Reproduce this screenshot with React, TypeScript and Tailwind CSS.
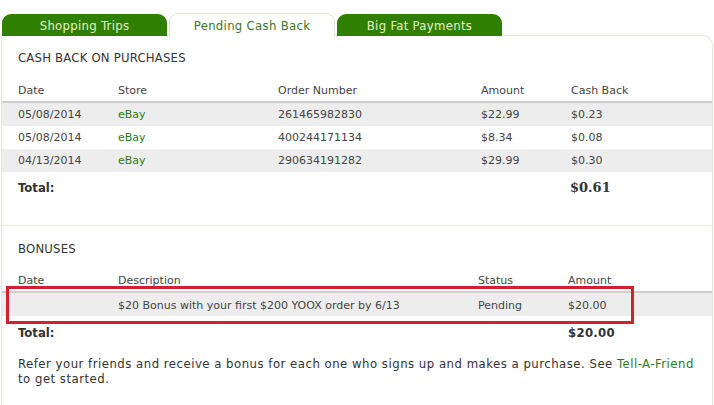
import { FC } from "react";

interface Purchase {
    date: string;
    store: string;
    order: string;
    amount: string;
    cashBack: string;
}

const purchases: Purchase[] = [
    { date: "05/08/2014", store: "eBay", order: "261465982830", amount: "$22.99", cashBack: "$0.23" },
    { date: "05/08/2014", store: "eBay", order: "400244171134", amount: "$8.34", cashBack: "$0.08" },
    { date: "04/13/2014", store: "eBay", order: "290634191282", amount: "$29.99", cashBack: "$0.30" },
];

const tahoma = "font-['DejaVu_Sans_Condensed','DejaVu_Sans',sans-serif]";
const verdana = "font-['DejaVu_Sans',Verdana,sans-serif]";

const App: FC = () => {
    return (
        <div className="relative h-[405px] w-[714px] overflow-hidden bg-white">
            {/* tabs */}
            <div className={`relative z-10 -mb-px flex gap-[2px] pl-[2px] pt-[13px] text-[13px] tracking-[0.3px] ${tahoma}`}>
                <div className="mt-px flex h-[22px] w-[165px] items-center justify-center rounded-t-[9px] bg-[#2f8000] pt-[2px] text-[#e3f3c4]">
                    Shopping Trips
                </div>
                <div className="flex h-[23px] w-[166px] items-center justify-center rounded-t-[9px] border border-b-0 border-[#e2e7d2] bg-white pt-[2px] text-[#3f7424]">
                    Pending Cash Back
                </div>
                <div className="mt-px flex h-[22px] w-[165px] items-center justify-center rounded-t-[9px] bg-[#2f8000] pt-[2px] text-[#e3f3c4]">
                    Big Fat Payments
                </div>
            </div>

            {/* panel */}
            <div className="ml-px mr-px h-[400px] rounded-tr-[10px] border border-b-0 border-[#e4e6d6] text-[#444]">
                <div className={`flex h-[43px] items-center pl-[16px] pt-px text-[13px] tracking-[0.2px] text-[#333] ${tahoma}`}>
                    CASH BACK ON PURCHASES
                </div>

                <div className={`text-[11px] ${verdana}`}>
                    <div className="grid h-[22px] grid-cols-[100px_160px_203px_90px_1fr] items-center pl-[16px] pt-[2px]">
                        <span>Date</span>
                        <span>Store</span>
                        <span>Order Number</span>
                        <span>Amount</span>
                        <span>Cash Back</span>
                    </div>
                    <div className="h-[2px] bg-[#cdcdcd]" />
                    {purchases.map((p, i) => (
                        <div
                            key={p.order}
                            className={`grid h-[23px] grid-cols-[100px_160px_203px_90px_1fr] items-center pl-[16px] pt-[2px] ${
                                i % 2 === 0 ? "bg-[#ededed]" : "bg-white"
                            }`}
                        >
                            <span>{p.date}</span>
                            <span className="text-[#2c7a14]">{p.store}</span>
                            <span>{p.order}</span>
                            <span>{p.amount}</span>
                            <span>{p.cashBack}</span>
                        </div>
                    ))}
                </div>

                <div className="grid h-[30px] grid-cols-[552px_1fr] items-center pl-[16px] pt-[2px] text-[#333]">
                    <span className={`text-[13px] font-bold ${tahoma}`}>Total:</span>
                    <span className="font-['DejaVu_Serif',Georgia,serif] text-[13px] font-bold">$0.61</span>
                </div>

                <div className="h-[24px] border-b border-[#e6e8d8]" />

                <div className={`flex h-[42px] items-center pl-[16px] pt-[3px] text-[13px] tracking-[0.2px] text-[#333] ${tahoma}`}>
                    BONUSES
                </div>

                <div className={`text-[11px] ${verdana}`}>
                    <div className="grid h-[23px] grid-cols-[100px_360px_90px_1fr] items-center pl-[16px] pt-[3px]">
                        <span>Date</span>
                        <span>Description</span>
                        <span>Status</span>
                        <span>Amount</span>
                    </div>
                    <div className="h-[2px] bg-[#cdcdcd]" />
                    <div className="grid h-[23px] grid-cols-[100px_360px_90px_1fr] items-center bg-[#ededed] pl-[16px] pt-[3px]">
                        <span />
                        <span>$20 Bonus with your first $200 YOOX order by 6/13</span>
                        <span>Pending</span>
                        <span>$20.00</span>
                    </div>
                </div>

                <div className={`grid h-[30px] grid-cols-[550px_1fr] items-center pl-[16px] pt-[3px] text-[13px] font-bold text-[#333] ${tahoma}`}>
                    <span>Total:</span>
                    <span className="tracking-[0.3px]">$20.00</span>
                </div>

                <p className={`mt-[10px] pl-[16px] pr-[14px] text-[13px] leading-[15px] tracking-[0.5px] text-[#333] ${tahoma}`}>
                    Refer your friends and receive a bonus for each one who signs up and makes a purchase. See{" "}
                    <a className="text-[#2c7a14]">Tell-A-Friend</a> to get started.
                </p>
            </div>

            {/* red highlight annotation */}
            <div className="absolute left-[6px] top-[286px] h-[38px] w-[628px] border-[3px] border-[#d4202c]" />
        </div>
    );
};

export default App;
